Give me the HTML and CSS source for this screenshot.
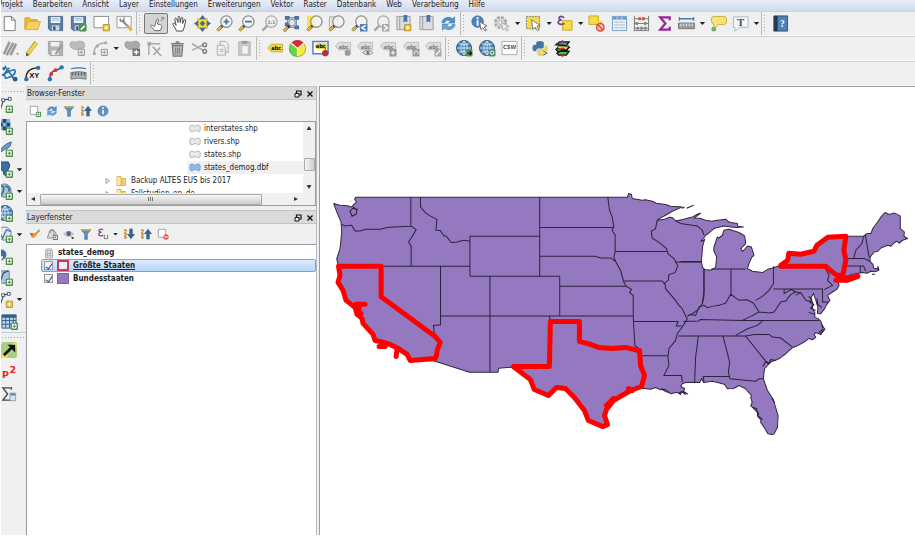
FILE: index.html
```
<!DOCTYPE html>
<html lang="de">
<head>
<meta charset="utf-8">
<title>QGIS</title>
<link rel="stylesheet" href="styles.css">
</head>
<body>
<svg class="defs" aria-hidden="true">
  <symbol id="plus" viewBox="0 0 8 8"><rect x=".7" y=".7" width="6.6" height="6.6" rx="1.2" fill="#fff" stroke="#4c8c4a" stroke-width="1.6"/><path d="M4 2.200v3.600M2.200 4h3.600" stroke="#4c8c4a" stroke-width="1.100"/></symbol>
  <symbol id="plusgray" viewBox="0 0 8 8"><rect x=".7" y=".7" width="6.6" height="6.6" rx="1" fill="#eee" stroke="#999" stroke-width="1.2"/><path d="M4 2v4M2 4h4" stroke="#999"/></symbol>
  <symbol id="star" viewBox="0 0 8 8"><rect x=".5" y=".5" width="7" height="7" rx="1" fill="#d9b83c" stroke="#b5942a"/><path d="M4 1.500v5M1.500 4h5M2.300 2.300l3.400 3.400M5.700 2.300 2.300 5.700" stroke="#fff8d0" stroke-width=".9"/></symbol>
  <symbol id="lens" viewBox="0 0 18 18"><path d="M1.500 16.500 7 11" stroke="#333" stroke-width="3"/><path d="M1.500 16.500 5.500 12.500" stroke="#e5bd3f" stroke-width="2.200"/><circle cx="11" cy="7" r="6" fill="#f4f4f2" fill-opacity=".8" stroke="#8b8b8b" stroke-width="1.300"/></symbol>
  <symbol id="lensgray" viewBox="0 0 18 18"><path d="M1.500 16.500 7 11" stroke="#a5a5a5" stroke-width="2.500"/><circle cx="11" cy="7" r="6" fill="#f0f0f0" stroke="#a8a8a8" stroke-width="1.300"/></symbol>
  <symbol id="floppy" viewBox="0 0 18 18"><path d="M1.500 1.500h15v15h-13l-2-2z" fill="#5a7ea6" stroke="#46678c"/><path d="M4 2h10v6.500H4z" fill="#edf2f7"/><path d="M5 3.500h8M5 5.500h8" stroke="#9eb4ca"/><path d="M5 11h8v5.500H5z" fill="#c9d3dc"/><path d="M6.500 12h2.500v4H6.500z" fill="#3c5878"/></symbol>
  <symbol id="tag" viewBox="0 0 18 18"><path d="M.5 6.500 4 2.500h12.500v8H4z" fill="#ddd" stroke="#bbb"/><text x="4" y="9" class="tagtext" fill="#777">abc</text></symbol>
  <symbol id="sync" viewBox="0 0 18 18"><path d="M2 8C2.500 3.500 9 .5 13 4l2.500-2v6.500H9l2-2C8.500 4.500 6 5.500 5 8z" fill="#4f8fc9" stroke="#3574ae" stroke-width=".6"/><path d="M16 10c-.5 4.500-7 7.500-11 4l-2.500 2V9.500H9l-2 2c2.500 2 5 1 6-1.500z" fill="#6ba5d8" stroke="#3574ae" stroke-width=".6"/></symbol>
  <symbol id="filter" viewBox="0 0 18 18"><path d="M1.500 2.500h15l-5.500 6.500v8H7V9z" fill="#5c8fc0" stroke="#45719e"/><path d="M1.500 2h15v2h-15z" fill="#d7b94c"/></symbol>
  <symbol id="globe" viewBox="0 0 18 18"><circle cx="8.500" cy="8.500" r="8" fill="#4b7fb2" stroke="#33597f"/><path d="M8.500 1v15M1 8.500h15M3 4q5.500 2.500 11 0M3 13q5.500-2.500 11 0M8.500 1Q1.500 8.500 8.500 16M8.500 1q7 7.500 0 15" fill="none" stroke="#d5e8f7"/></symbol>
  <symbol id="expand" viewBox="0 0 18 18"><path d="M3 2v14M3 4h4M3 9h4M3 14h4" stroke="#c89032" stroke-width="2.500" stroke-dasharray="3 1"/><path d="M12 17V8" stroke="#35658e" stroke-width="5"/><path d="M12 1l6 8H6z" fill="#35658e"/></symbol>
  <symbol id="shape" viewBox="0 0 14 10"><path d="M3.500 1C1 1 .7 3 1 5.500 1.300 9.500 3 9.500 4.500 8.500 6 7 9 7 10 8.500c1.500 1 3 .5 3-2.500C13.500 2 12.500 1 10.500 1 8 1 8 2.500 7 2.500S5.500 1 3.500 1z"/></symbol>
  <symbol id="folder" viewBox="0 0 10 10"><path d="M1 .5h4v2h4.500v7H1z" fill="#f2d675" stroke="#d7b650"/><path d="M2.500 1v8" stroke="#fff0b8" stroke-width="2"/><path d="M6 3v6" stroke="#d8aa35"/></symbol>
</svg>

<div class="app">
  <nav class="menubar" aria-label="Menü">
    <a href="#">Projekt</a><a href="#">Bearbeiten</a><a href="#">Ansicht</a><a href="#">Layer</a><a href="#">Einstellungen</a><a href="#">Erweiterungen</a><a href="#">Vektor</a><a href="#">Raster</a><a href="#">Datenbank</a><a href="#">Web</a><a href="#">Verarbeitung</a><a href="#">Hilfe</a>
  </nav>

  <div class="toolbar">
    <div class="group g-file">
      <button aria-label="Neu"><svg viewBox="0 0 18 18"><path d="M3.500 1.500h7.500l4 4v11H3.500z" fill="#fff" stroke="#777"/><path d="M11 1.500v4h4" fill="none" stroke="#777"/></svg></button>
      <button aria-label="Öffnen"><svg viewBox="0 0 18 18"><path d="M1 15V3h5l1.500 2H14v3" fill="#e9b93a" stroke="#cf9c27"/><path d="M1 15.500 4.500 7H17.500L14.500 15.500z" fill="#f8d260" stroke="#dcae38"/></svg></button>
      <button aria-label="Speichern"><svg viewBox="0 0 18 18"><use href="#floppy"/></svg></button>
      <button aria-label="Speichern als"><svg viewBox="0 0 18 18"><use href="#floppy"/><rect x="9.500" y="9.500" width="8" height="8" rx="1.500" fill="#4c9350"/><path d="M11.500 15.500 15.500 11.500" stroke="#fff" stroke-width="1.600"/></svg></button>
      <button aria-label="Neues Drucklayout"><svg viewBox="0 0 18 18"><path d="M1 1.500h15.500v12H1z" fill="#fff" stroke="#888"/><use href="#star" x="10" y="9.500" width="8" height="8"/></svg></button>
      <button aria-label="Layoutverwaltung"><svg viewBox="0 0 18 18"><path d="M1 1.500h15v12H1z" fill="#fff" stroke="#999"/><path d="M6 5.500l7 7" stroke="#888" stroke-width="2.200"/><path d="M4.500 3.500v3h3M9 2.500q-2 3 .5 4.500" fill="none" stroke="#888" stroke-width="1.400"/><path d="M12 11l4.500 5.500" stroke="#dcb43b" stroke-width="2.800"/></svg></button>
    </div>
    <span class="grip"></span>
    <div class="group g-nav">
      <button class="pressed" aria-label="Touch"><svg viewBox="0 0 18 18"><path d="M7 16.500 3 12c-.5-1.500 1-2 2-.8L7 12.500 9 5c.4-1.400 2.300-1 2 .5L10 9.500l3.500 1c1 .5 1.300 1.200 1 2.200l-1.500 3.800z" fill="#fff" stroke="#666"/><path d="M13.500 6.500l3-4M16.500 2.500h-2.500M16.500 2.500V5" fill="none" stroke="#888"/></svg></button>
      <button aria-label="Karte verschieben"><svg viewBox="0 0 18 18"><path d="M6 17 2 10c-.5-1.500 1-2 2-1l1.500 2L4 4.500C4 3 5.500 3 6 4.300L7.500 8V2.500C7.500 1 9.300 1 9.300 2.500L9.800 8l1-4.700c.4-1.300 1.700-1 1.700.3L12.300 9l1.500-3.500c.7-1.200 2-.6 1.700.7L14 13l-1.500 4z" fill="#fff" stroke="#444"/></svg></button>
      <button aria-label="Zur Auswahl verschieben"><svg viewBox="0 0 18 18"><path d="M4 4h10v10H4z" fill="#f6d833" stroke="#d9b92a"/><path d="M9 0l3.500 4.500h-7zM9 18l3.500-4.500h-7zM0 9l4.500-3.500v7zM18 9l-4.500-3.500v7z" fill="#3f6c9f"/><path d="M9 6l3 3-3 3-3-3z" fill="#3f6c9f"/></svg></button>
      <button aria-label="Hineinzoomen"><svg viewBox="0 0 18 18"><use href="#lens"/><path d="M11 4v6M8 7h6" stroke="#3f78b4" stroke-width="2"/></svg></button>
      <button aria-label="Hinauszoomen"><svg viewBox="0 0 18 18"><use href="#lens"/><path d="M7.500 7h7" stroke="#3f78b4" stroke-width="2"/></svg></button>
      <button aria-label="Native Auflösung"><svg viewBox="0 0 18 18"><use href="#lensgray"/><text x="7" y="9" class="tiny">1:1</text></svg></button>
      <button aria-label="Volle Ausdehnung"><svg viewBox="0 0 18 18"><path d="M2 1h5v4H2zM12 1h5v4h-5zM12 11h5v4h-5zM2 8h4v4H2z" fill="#46729f"/><path d="M5 3h9v10H5z" fill="none" stroke="#46729f"/><path d="M1 17l6-6" stroke="#333" stroke-width="3"/><path d="M1 17l4-4" stroke="#e0b63c" stroke-width="2.200"/><circle cx="9.500" cy="8" r="3.500" fill="#dce7ef" stroke="#888"/></svg></button>
      <button aria-label="Auf Auswahl zoomen"><svg viewBox="0 0 18 18"><path d="M1 1h10v12H1z" fill="#f5df54"/><use href="#lens"/></svg></button>
      <button aria-label="Auf Layer zoomen"><svg viewBox="0 0 18 18"><path d="M1.500 2h9v11h-9z" fill="#e7e7e7" stroke="#aaa"/><use href="#lens"/></svg></button>
      <button aria-label="Zoom zurück"><svg viewBox="0 0 18 18"><use href="#lens"/><path d="M9.500 9.500h8v8h-8z" fill="#4f83b8"/><path d="M15.500 11l-4 2.500 4 2.500" fill="none" stroke="#fff" stroke-width="1.500"/></svg></button>
      <button aria-label="Zoom vor"><svg viewBox="0 0 18 18"><use href="#lensgray"/><path d="M9.500 9.500h8v8h-8z" fill="#a9a9a9"/><path d="M11.500 11l4 2.500-4 2.500" fill="none" stroke="#fff" stroke-width="1.500"/></svg></button>
      <button aria-label="Neues Lesezeichen"><svg viewBox="0 0 18 18"><path d="M2 1.500h14v14H2z" fill="#ddd" stroke="#999"/><path d="M5 2v13" stroke="#999"/><path d="M9 0h4v8l-2-1.500L9 8z" fill="#3e77ae"/><use href="#star" x="9.500" y="9.500" width="8" height="8"/></svg></button>
      <button aria-label="Lesezeichen"><svg viewBox="0 0 18 18"><path d="M2 1.500h14v14H2z" fill="#ddd" stroke="#999"/><path d="M5 2v13" stroke="#999"/><path d="M9 0h4v8l-2-1.500L9 8z" fill="#3e77ae"/></svg></button>
      <button aria-label="Aktualisieren"><svg viewBox="0 0 18 18"><use href="#sync"/></svg></button>
    </div>
    <span class="grip"></span>
    <div class="group g-attr">
      <button aria-label="Objekte abfragen"><svg viewBox="0 0 18 18"><circle cx="7" cy="7" r="6" fill="#4c84bc" stroke="#3b6b9e"/><path d="M7 2.500v2M7 5.500v6" stroke="#fff" stroke-width="2"/><path d="M9 7l8 4.500-3 1 2.500 3.500-1.500 1-2.500-3.500-2 2z" fill="#fff" stroke="#666"/></svg></button>
      <button aria-label="Aktion ausführen"><svg viewBox="0 0 18 18"><circle cx="8" cy="8" r="5.500" fill="#ddd" stroke="#aaa" stroke-width="3" stroke-dasharray="3 1.300"/><circle cx="8" cy="8" r="2" fill="#fff" stroke="#aaa"/><path d="M9 8l8 4-3 1 2 3-1.500 1-2-3-2 2z" fill="#eee" stroke="#aaa"/></svg></button><i class="caret"></i>
      <button aria-label="Objekte wählen"><svg viewBox="0 0 18 18"><path d="M1.500 1.500h14v13h-14z" fill="#f6dc42" stroke="#777" stroke-dasharray="2 1"/><path d="M7 5l9 6-3.500.8 2.500 4-1.700 1-2.500-4-2.500 2.500z" fill="#fff" stroke="#777"/></svg></button><i class="caret"></i>
      <button aria-label="Mit Ausdruck wählen"><svg viewBox="0 0 18 18"><path d="M7 6h10v10H7z" fill="#f6dc42" stroke="#c9a72c"/><path d="M8.500 3Q6 .5 3.500 2.300 2.500 5 6 5.300 2 5.500 2.300 8.300 4 11 9 9" fill="none" stroke="#764584" stroke-width="1.800"/></svg></button><i class="caret"></i>
      <button aria-label="Auswahl aufheben"><svg viewBox="0 0 18 18"><path d="M1 1h10v9H1z" fill="#f6dc42" stroke="#c9a72c"/><path d="M10 6h5v5h-5z" fill="#f6dc42"/><circle cx="13" cy="13" r="4" fill="#f5c5bd" stroke="#d84d3d" stroke-width="1.500"/><path d="M10 10l6 6" stroke="#d84d3d" stroke-width="1.500"/></svg></button>
      <button aria-label="Attributtabelle"><svg viewBox="0 0 18 18"><path d="M1.500 1.500h15v15h-15z" fill="#f5f9fc" stroke="#6b9bc7"/><path d="M2 2h14v3H2z" fill="#6c9fcd"/><path d="M3 7.500h12M3 10.500h12M3 13.500h12" stroke="#9fb4c6"/><path d="M6.500 2v14M11.500 2v14" stroke="#c7d8e6"/></svg></button>
      <button aria-label="Feldrechner"><svg viewBox="0 0 18 18"><path d="M1.500 1v16M16.500 1v16M1 4h16M1 9h16M1 14h16M1 16.500h16" stroke="#777" fill="none"/><path d="M7 2.500v3M11 2.500v3" stroke="#df5045" stroke-width="3"/><path d="M4 7.500v3M13 7.500v3" stroke="#58a367" stroke-width="2.500"/><path d="M5 12.500v3M9 12.500v3M13 12.500v3" stroke="#888" stroke-width="2.500"/></svg></button>
      <button aria-label="Statistik"><svg viewBox="0 0 18 18"><path d="M14.500 5.500V2.500H4.500L10 9l-5.500 6.500h10V12.500" fill="none" stroke="#99229a" stroke-width="2.400"/></svg></button>
      <button aria-label="Linie messen"><svg viewBox="0 0 18 18"><path d="M1 4h16M1.500 2v4M16.500 2v4" stroke="#557da2" stroke-width="1.500"/><path d="M.5 8.500h17v6H.5z" fill="#999" stroke="#777"/><path d="M3 9v3M6 9v3M9 9v3M12 9v3M15 9v3" stroke="#eee"/></svg></button><i class="caret"></i>
      <button aria-label="Kartenhinweise"><svg viewBox="0 0 18 18"><path d="M5 1.500h10q2.500 0 2.500 3v3q0 2.500-3 2.500H9l-5 5.500V9.500Q1.500 9 1.500 6V4q0-2.500 3.500-2.500z" fill="#f6e47a" stroke="#c6aa3a"/><circle cx="4" cy="15" r="2.500" fill="#72a974"/></svg></button>
      <button aria-label="Textanmerkung"><svg viewBox="0 0 18 18"><path d="M1.500 2h15.500v11H8l-5 4v-4H1.500z" fill="#f5f8fa" stroke="#a8b6c0"/><text x="5.500" y="12" class="serif">T</text></svg></button><i class="caret"></i>
    </div>
    <span class="grip"></span>
    <div class="group g-one">
      <button aria-label="Hilfe"><svg viewBox="0 0 18 18"><path d="M2 1h14.500v16H2z" fill="#4e82b5" stroke="#30506e"/><path d="M2 1h4v16H2z" fill="#26394d"/><text x="8.500" y="13" class="help">?</text></svg></button>
    </div>
  </div>

  <div class="toolbar">
    <div class="group g-edit">
      <button aria-label="Aktuelle Änderungen"><svg viewBox="0 0 18 18"><path d="M2 15 8 2M5 16 12 3M9 16 15 4" stroke="#999" stroke-width="2.600"/><path d="M15 14h3l-1.500 2z" fill="#777"/></svg></button>
      <button aria-label="Bearbeitung umschalten"><svg viewBox="0 0 18 18"><path d="M3.500 15 13 2.500" stroke="#b79a32" stroke-width="4.500"/><path d="M4 14.500 13 3" stroke="#f4d64c" stroke-width="3"/><path d="M2 17.500l.5-4 3 2.500z" fill="#555"/></svg></button>
      <button aria-label="Änderungen speichern"><svg viewBox="0 0 18 18"><path d="M1.500 1.500h15v15h-13l-2-2z" fill="#b3b3b3" stroke="#a0a0a0"/><path d="M4 2h9v5H4zM5 11h7v5H5z" fill="#eee"/><path d="M9 15l7-10" stroke="#999" stroke-width="2"/></svg></button>
      <button aria-label="Objekt hinzufügen"><svg viewBox="0 0 18 18"><path d="M1 5q0-4 4-3 2 1 5-.5 6-1 6.500 3.500T12 9.500q-2.500-.5-4 .5-3 .5-4-1-3-1-3-4z" fill="#bcbcbc" stroke="#aaa"/><use href="#plusgray" x="9" y="9" width="8" height="8"/></svg></button>
      <button aria-label="Kreisbogen"><svg viewBox="0 0 18 18"><path d="M2 15Q2 3 15 3" fill="none" stroke="#aaa" stroke-width="1.500"/><path d="M1 13h3v3H1zM13 1.500h3v3h-3zM4 5h3v3H4z" fill="#aaa"/><use href="#plusgray" x="9" y="9" width="8" height="8"/></svg></button><i class="caret"></i>
      <button aria-label="Objekt verschieben"><svg viewBox="0 0 18 18"><path d="M1 5q0-4 4-3 2 1 5-.5 6-1 6.500 3.500T12 9.500q-2.500-.5-4 .5-3 .5-4-1-3-1-3-4z" fill="#aaa" stroke="#999"/><path d="M9 9h8v8H9z" fill="#777"/><path d="M13 10.500v5M10.500 13h5" stroke="#fff" stroke-width="1.500"/></svg></button>
      <button aria-label="Knotenwerkzeug"><svg viewBox="0 0 18 18"><path d="M3 16V4h12" fill="none" stroke="#aaa" stroke-width="1.500"/><path d="M1.500 2h4v4h-4z" fill="#aaa"/><path d="M7 7l9 10M15 8l-7 8" fill="none" stroke="#a5a5a5" stroke-width="1.600"/></svg></button>
      <button aria-label="Löschen"><svg viewBox="0 0 18 18"><path d="M3.500 6h11l-1 11h-9z" fill="#bbb" stroke="#777" stroke-width="1.300"/><path d="M2.500 4h13M7 2h4" stroke="#777" stroke-width="1.600"/><path d="M7 8v7M9 8v7M11 8v7" stroke="#777"/></svg></button>
      <button aria-label="Ausschneiden"><svg viewBox="0 0 18 18"><path d="M1 4l12 7M1 11l12-6" stroke="#aaa" stroke-width="1.700"/><circle cx="14.500" cy="5" r="2" fill="none" stroke="#777" stroke-width="1.400"/><circle cx="14.500" cy="12" r="2" fill="none" stroke="#777" stroke-width="1.400"/></svg></button>
      <button aria-label="Kopieren"><svg viewBox="0 0 18 18"><path d="M6.500 1.500h6l2.500 2.500v9H6.500z" fill="#eee" stroke="#aaa"/><path d="M3.500 5.500h6L12 8v8H3.500z" fill="#eee" stroke="#aaa"/><path d="M6 10h4M6 12h4" stroke="#aaa"/></svg></button>
      <button aria-label="Einfügen"><svg viewBox="0 0 18 18"><path d="M3 2h12v14H3z" fill="#ccc" stroke="#aaa"/><path d="M6 1h6v3H6z" fill="#999"/><path d="M6 6h7v9H6z" fill="#f4f4f4" stroke="#bbb"/></svg></button>
    </div>
    <span class="grip"></span>
    <div class="group g-label">
      <button aria-label="Beschriftung"><svg viewBox="0 0 18 18"><path d="M1 8.500 4.500 4.500h12v8h-12z" fill="#f2d93f" stroke="#c9ab2d"/><text x="4.500" y="10.500" class="tagtext">abc</text></svg></button>
      <button aria-label="Diagramm"><svg viewBox="0 0 18 18"><path d="M9 9 2.500 3.500A8.200 8.200 0 0 1 15.500 3.500z" fill="#e02a2a" stroke="#9a2020" stroke-width=".6"/><path d="M9 9 15.500 3.500A8.200 8.200 0 0 1 9 17.300z" fill="#f7ec35" stroke="#6b7a20" stroke-width=".6"/><path d="M9 9v8.300A8.200 8.200 0 0 1 2.500 3.500z" fill="#66d644" stroke="#3b8a2a" stroke-width=".6"/><path d="M2.500 3.500 9 9l6.500-5.500M9 9v8" fill="none" stroke="#fff" stroke-width="1.200"/></svg></button>
      <button aria-label="Beschriftung hervorheben"><svg viewBox="0 0 18 18"><path d="M1 1.500h16v13H1z" fill="#fff" stroke="#4f83c4" stroke-width="1.600"/><path d="M2.500 7 5 3.500h10.500v6H5z" fill="#f2d93f"/><text x="4" y="8.500" class="tagtext">abc</text><path d="M14 8v4" stroke="#555"/><circle cx="14" cy="14" r="3.300" fill="#c02d2d"/></svg></button>
      <button aria-label="Beschriftung fixieren"><svg viewBox="0 0 18 18"><use href="#tag"/><circle cx="13.500" cy="13.500" r="3.300" fill="#999"/></svg></button>
      <button aria-label="Beschriftung zeigen"><svg viewBox="0 0 18 18"><use href="#tag"/><path d="M6 13.500q5.500-5 11 0-5.500 4.500-11 0z" fill="#eee" stroke="#888"/><circle cx="11.500" cy="13.500" r="1.800" fill="#777"/></svg></button>
      <button aria-label="Beschriftung verschieben"><svg viewBox="0 0 18 18"><use href="#tag"/><path d="M10 9.500h7.500v8H10z" fill="#999"/><path d="M13.800 11v5M11.500 13.500h4.500" stroke="#fff"/></svg></button>
      <button aria-label="Beschriftung drehen"><svg viewBox="0 0 18 18"><use href="#tag"/><path d="M10 9.500h7.500v8H10z" fill="#999"/><path d="M12 15v-2q2-3 4 0v2" fill="none" stroke="#fff"/></svg></button>
      <button aria-label="Beschriftung ändern"><svg viewBox="0 0 18 18"><use href="#tag"/><path d="M10 9.500h7.500v8H10z" fill="#aaa"/><path d="M11.500 16 16 11" stroke="#fff" stroke-width="1.500"/></svg></button>
    </div>
    <span class="grip"></span>
    <div class="group g-three">
      <button aria-label="Metasuche"><svg viewBox="0 0 18 18"><use href="#globe"/><rect x="10.500" y="10" width="7" height="7.500" rx="1" fill="#4c9360"/><path d="M12 14h4M14.500 12l2 2-2 2" fill="none" stroke="#111" stroke-width="1.200"/></svg></button>
      <button aria-label="Websuche"><svg viewBox="0 0 18 18"><use href="#globe"/><rect x="10.500" y="10" width="7" height="7.500" rx="1" fill="#4c9360"/><circle cx="14" cy="13.500" r="1.800" fill="none" stroke="#fff"/></svg></button>
      <button aria-label="CSW"><svg viewBox="0 0 18 18"><path d="M1 1.500h16v14H1z" fill="#fdfdfd" stroke="#aaa"/><text x="2" y="10" class="csw">CSW</text></svg></button>
    </div>
    <span class="grip"></span>
    <div class="group g-two">
      <button aria-label="Python"><svg viewBox="0 0 18 18"><path d="M4.500 5V3q0-2 4-2t4 2v4q0 2-2 2H6.500Q4.500 9 4.500 12H3Q.5 12 .5 8.500T3 5h5.500" fill="#3f78a8"/><path d="M13.500 5.500q3.500 0 3.500 3.500t-3 3.500H9v1h4v1.500q0 2-3.500 2t-4-2v-3.500q0-2 2-2h4q2 0 2-2z" fill="#f4d258"/><path d="M12 12l4 2-4 2" fill="none" stroke="#555"/></svg></button>
      <button aria-label="Plugin"><svg viewBox="0 0 18 18"><path d="M3 14l5-3 8 1-3 4H5zM2 10l4-3 10 1-4 4H4z" fill="#49ba4b" stroke="#111" stroke-width="1.400"/><path d="M3 9l2-3 11 .5-3 4z" fill="#f0d530" stroke="#111"/><path d="M2 5l4-3h10l-3 4z" fill="#26a9c8" stroke="#111" stroke-width="1.400"/><path d="M9 0v3M9 15v3M7 9h4" stroke="#d92d2d" stroke-width="1.500"/></svg></button>
    </div>
  </div>

  <div class="toolbar last">
    <div class="group g-cad">
      <button aria-label="Spur"><svg viewBox="0 0 18 18"><path d="M4 1 14 15M1 11Q15 2 15 7T5 14Q1 9 9 3" fill="none" stroke="#2776ae" stroke-width="1.800"/><circle cx="15" cy="15" r="2.500" fill="#1f5f94"/><circle cx="3" cy="4" r="1.500" fill="#1f5f94"/></svg></button>
      <button aria-label="Kreis XY"><svg viewBox="0 0 18 18"><path d="M2 15Q2 3 15 3" fill="none" stroke="#222" stroke-width="1.500"/><circle cx="2.500" cy="15" r="2.300" fill="#2776ae"/><circle cx="15" cy="3" r="2.300" fill="#2776ae"/><text x="5.500" y="13.500" class="xy">XY</text></svg></button>
      <button aria-label="Linienzug"><svg viewBox="0 0 18 18"><path d="M3 15Q3 7 9 5.500T15 3" fill="none" stroke="#444" stroke-width="1.500"/><circle cx="4.500" cy="9.500" r="2" fill="#dd3232"/><circle cx="9" cy="5.500" r="2" fill="#dd3232"/><circle cx="3" cy="15" r="2.300" fill="#2776ae"/><circle cx="15.500" cy="2.500" r="2.300" fill="#2776ae"/></svg></button>
      <button aria-label="Maßstab"><svg viewBox="0 0 18 18"><path d="M1 4q8-2 16 0" fill="none" stroke="#3f78b4" stroke-width="1.300"/><path d="M1 8q8-2 16 0v7q-8-2-16 0z" fill="#b0b0b0" stroke="#777"/><path d="M3 8v3M6 8v3M9 8v3M12 8v3M15 8v3" stroke="#444"/></svg></button>
    </div>
    <span class="grip"></span>
  </div>

  <div class="workspace">
    <div class="sidebar">
      <span class="hgrip first"></span>
      <div class="stack eleven">
        <div><button aria-label="Vektorlayer"><svg viewBox="0 0 18 18"><path d="M3 16 7 4l8-1" fill="none" stroke="#456" stroke-width="1.300"/><path d="M5 3h3v3H5zM12 1.500h3v3h-3z" fill="#fff" stroke="#456"/><use href="#plus" x="9" y="10" width="8" height="8"/></svg></button></div>
        <div><button aria-label="Rasterlayer"><svg viewBox="0 0 18 18"><path d="M2 1h12v12H2z" fill="#8eb4d8"/><path d="M6 1h4v4H6zM2 5h4v4H2zM10 5h4v4h-4zM6 9h4v4H6z" fill="#1f4a78"/><use href="#plus" x="9" y="10" width="8" height="8"/></svg></button></div>
        <div><button aria-label="SpatiaLite"><svg viewBox="0 0 18 18"><path d="M2 15Q4 6 15 2q0 6-7 8-4 2-6 5z" fill="#6f9dc9" stroke="#31577d"/><use href="#plus" x="9" y="10" width="8" height="8"/></svg></button></div>
        <div><button aria-label="PostGIS"><svg viewBox="0 0 18 18"><path d="M3 1h9q3 3 0 8l-2 7q-4-1-3-5Q2 10 3 1z" fill="#3a6f9f" stroke="#264e75"/><use href="#plus" x="9" y="10" width="8" height="8"/></svg></button><i class="caret"></i></div>
        <div><button aria-label="WMS"><svg viewBox="0 0 18 18"><circle cx="8" cy="8" r="7" fill="#acc5dc" stroke="#5781a8"/><path d="M3 4q5-2 4 3T4 13M9 3q6 2 3 6" fill="none" stroke="#426f9b" stroke-width="2"/><use href="#plus" x="9" y="10" width="8" height="8"/></svg></button><i class="caret"></i></div>
        <div><button aria-label="WCS"><svg viewBox="0 0 18 18"><use href="#globe"/><use href="#plus" x="9" y="10" width="8" height="8"/></svg></button></div>
        <div><button aria-label="WFS"><svg viewBox="0 0 18 18"><circle cx="8" cy="8" r="7" fill="#dfeaf3" stroke="#5781a8"/><path d="M2 6l4 7 4-9 5 2" fill="none" stroke="#426f9b" stroke-width="1.300"/><use href="#plus" x="9" y="10" width="8" height="8"/></svg></button><i class="caret"></i></div>
        <div><button aria-label="Textdatei"><svg viewBox="0 0 18 18"><path d="M8 3a3.500 3.500 0 1 0-2 5.500Q7 11 3 14q7-2 7-7 0-3-2-4z" fill="#3e719f"/><use href="#plus" x="9" y="10" width="8" height="8"/></svg></button></div>
        <div><button aria-label="Virtueller Layer"><svg viewBox="0 0 18 18"><path d="M1 2h12v13H1z" fill="#a9c5dd" stroke="#62859f"/><path d="M3 14 7 4l5-2" fill="none" stroke="#35577a" stroke-width="1.400"/><use href="#plus" x="9" y="10" width="8" height="8"/></svg></button></div>
        <div><button aria-label="Neuer Layer"><svg viewBox="0 0 18 18"><path d="M3 16 7 4l7-1" fill="none" stroke="#456" stroke-width="1.300"/><path d="M5 3h3v3H5zM11 1.500h3v3h-3z" fill="#fff" stroke="#456"/><use href="#star" x="9" y="10" width="8" height="8"/></svg></button><i class="caret"></i></div>
        <div><button aria-label="Tabelle"><svg viewBox="0 0 18 18"><path d="M1 2h15v14H1z" fill="#bdd4e8" stroke="#315f8b"/><path d="M1 2h15v3H1z" fill="#315f8b"/><path d="M5 2v14M9 2v14M13 2v14M1 8h15M1 12h15" stroke="#315f8b"/><use href="#plus" x="10" y="10" width="8" height="8"/></svg></button></div>
      </div>
      <span class="hgrip"></span>
      <div class="stack three">
        <div><button aria-label="Pfeil"><svg viewBox="0 0 18 18"><rect width="17" height="17" rx="3" fill="#a9ce83"/><circle cx="4" cy="14" r="3" fill="#f2e642"/><circle cx="14" cy="4" r="3" fill="#f2e642"/><path d="M3 14 11 6" stroke="#111" stroke-width="3"/><path d="M7 3h8v8z" fill="#111"/></svg></button></div>
        <div><button aria-label="P2"><svg viewBox="0 0 18 18"><text x="1" y="15" class="red">P</text><text x="9" y="10" class="red">2</text></svg></button></div>
        <div><button aria-label="Summe"><svg viewBox="0 0 18 18"><path d="M11 4V2H2l5 6.500L2 15h8" fill="none" stroke="#444" stroke-width="1.400"/><path d="M9.500 7.500h6v8h-6z" fill="#d8e2ee" stroke="#8b9bb0"/><path d="M10 8h5v2h-5z" fill="#5079b7"/></svg></button></div>
      </div>
    </div>

    <div class="docks">
      <section class="dock">
        <header><h2>Browser-Fenster</h2><button aria-label="Abdocken"><svg viewBox="0 0 8 8"><path d="M2.500 3V1h4.500v4H5" fill="none" stroke="#111" stroke-width="1.200"/><path d="M1 3.500h4V7H1z" fill="#eee" stroke="#111"/></svg></button><button aria-label="Schließen"><svg viewBox="0 0 8 8"><path d="M1.500 1.500l5 5M6.500 1.500l-5 5" stroke="#111" stroke-width="1.400"/></svg></button></header>
        <div class="docktools">
          <button aria-label="Hinzufügen"><svg viewBox="0 0 18 18"><path d="M2 2h11v12H2z" fill="#fff" stroke="#999" stroke-width="1.300"/><use href="#plus" x="10" y="10" width="8" height="8"/></svg></button>
          <button aria-label="Aktualisieren"><svg viewBox="0 0 18 18"><use href="#sync"/></svg></button>
          <button aria-label="Filtern"><svg viewBox="0 0 18 18"><use href="#filter"/></svg></button>
          <button aria-label="Einklappen"><svg viewBox="0 0 18 18"><use href="#expand"/></svg></button>
          <button aria-label="Eigenschaften"><svg viewBox="0 0 18 18"><circle cx="9" cy="9" r="7.500" fill="#5b92c8" stroke="#41739f"/><path d="M9 3.500v2.500M9 7.500v6.500" stroke="#fff" stroke-width="2.300"/></svg></button>
        </div>
        <div class="browser">
          <div class="view">
            <ul class="files">
              <li class="file"><svg class="shp" viewBox="0 0 14 10"><use href="#shape"/></svg>interstates.shp</li>
              <li class="file"><svg class="shp" viewBox="0 0 14 10"><use href="#shape"/></svg>rivers.shp</li>
              <li class="file"><svg class="shp" viewBox="0 0 14 10"><use href="#shape"/></svg>states.shp</li>
              <li class="file current"><svg class="shp" viewBox="0 0 14 10"><use href="#shape"/></svg>states_demog.dbf</li>
              <li class="dir"><svg class="twist" viewBox="0 0 6 8"><path d="M1 1.500 4.500 4 1 6.500z" fill="#fff" stroke="#999"/></svg><svg class="fold" viewBox="0 0 10 10"><use href="#folder"/></svg>Backup ALTES EUS bis 2017</li>
              <li class="dir"><svg class="twist" viewBox="0 0 6 8"><path d="M1 1.500 4.500 4 1 6.500z" fill="#fff" stroke="#999"/></svg><svg class="fold" viewBox="0 0 10 10"><use href="#folder"/></svg>Fallstudien_en_de</li>
            </ul>
            <div class="vbar"><i class="up"></i><span class="thumb"></span><i class="down"></i></div>
          </div>
          <div class="hbar"><i class="left"></i><span class="thumb"><b></b></span><i class="right"></i></div>
        </div>
      </section>

      <section class="dock grow">
        <header><h2>Layerfenster</h2><button aria-label="Abdocken"><svg viewBox="0 0 8 8"><path d="M2.500 3V1h4.500v4H5" fill="none" stroke="#111" stroke-width="1.200"/><path d="M1 3.500h4V7H1z" fill="#eee" stroke="#111"/></svg></button><button aria-label="Schließen"><svg viewBox="0 0 8 8"><path d="M1.500 1.500l5 5M6.500 1.500l-5 5" stroke="#111" stroke-width="1.400"/></svg></button></header>
        <div class="docktools">
          <button aria-label="Stil"><svg viewBox="0 0 18 18"><path d="M10 9l6-6" stroke="#c89b45" stroke-width="3"/><path d="M1 7q7 2 8 0l3 3q-4 7-8 4z" fill="#e9a13a"/><path d="M1 7l6 2-3 3z" fill="#d8432f"/></svg></button>
          <button aria-label="Gruppe"><svg viewBox="0 0 18 18"><path d="M2 15 6 3h6v12zM6 8 9 2l6 5v6" fill="#ddd" stroke="#888" stroke-width="1.300"/><use href="#plus" x="10" y="10" width="8" height="8"/></svg></button>
          <button aria-label="Sichtbarkeit"><svg viewBox="0 0 18 18"><path d="M1 9q7-8 15 0-8 7-15 0z" fill="#ddd" stroke="#999"/><circle cx="8.500" cy="8.500" r="3.500" fill="#456a91"/><path d="M12 14h5l-2.500 3z" fill="#222"/></svg></button>
          <button aria-label="Filter"><svg viewBox="0 0 18 18"><use href="#filter"/></svg></button>
          <button aria-label="Ausdrucksfilter"><svg viewBox="0 0 18 18"><path d="M9 3Q6 .5 3 3q-.5 3 4 3.500Q2 7 2.500 10q2 3 7 1" fill="none" stroke="#8a4f9c" stroke-width="2"/><path d="M11 10v6h5v-6" fill="none" stroke="#777" stroke-width="1.500"/></svg></button><i class="caret"></i>
          <button aria-label="Ausklappen"><svg viewBox="0 0 18 18"><path d="M3 2v14M3 4h4M3 9h4M3 14h4" stroke="#c89032" stroke-width="2.500" stroke-dasharray="3 1"/><path d="M12 1v9" stroke="#35658e" stroke-width="5"/><path d="M12 17l6-8H6z" fill="#35658e"/></svg></button>
          <button aria-label="Einklappen"><svg viewBox="0 0 18 18"><use href="#expand"/></svg></button>
          <button aria-label="Entfernen"><svg viewBox="0 0 18 18"><path d="M2 2h11v12H2z" fill="#fff" stroke="#999" stroke-width="1.300"/><circle cx="13.500" cy="13.500" r="4" fill="#dc5a5a"/><path d="M11 13.500h5" stroke="#fff" stroke-width="1.500"/></svg></button>
        </div>
        <ul class="layers">
          <li><svg class="tab" viewBox="0 0 11 12"><path d="M1.500 3.500h8v8h-8zM2.500 3.500v-2h6v2M1.500 6.500h8M1.500 9h8M4 4v7M7 4v7" fill="#eee" stroke="#aaa"/></svg>states_demog</li>
          <li class="active"><input type="checkbox" id="l1" checked><span class="swatch outline"></span><label for="l1">Größte Staaten</label></li>
          <li><input type="checkbox" id="l2" checked><span class="swatch"></span><label for="l2">Bundesstaaten</label></li>
        </ul>
      </section>
    </div>

    <main class="canvas">
      <svg class="map" viewBox="320 87 594 448" preserveAspectRatio="xMinYMin meet" role="img" aria-label="Karte der Bundesstaaten">
        <path class="land" d="M333.700 203.300 340 205 347 205.500 351.700 206.700 354 204 356.500 202 354.500 199 355.700 197H626.700L628.300 193.300 631 194.300 631.700 198.300 641.700 200 645 199.500 651.700 201 656 203 665 204.300 670 206 681.700 206.700 671.700 211 665 215 660 217.700 656.700 220 664 219 669 217 671.700 217.300 675 220.700 683 219 691.700 216.700 698.300 213.300 700 213 696 216 693.300 217.700 699 218 705 220 711 221 716.700 220 725 219 727 221 730 222.300 736.700 223.300 737 226 742.700 226.700 735 227.300 723.300 225.700 718 227 713.300 228.300 708 233 705 235 703 238 700 241 703 240 704 239 702 246 701.300 255 700.700 261.700 702 267 704 269.300 710 270 713 268.500 715 266.700 716 256.700 713 250 713.300 246.700 716.700 236.700 718 238 721.700 235 723.300 230 728.300 229 738.300 232.300 744 235.700 745 243.300 740 248.300 741.700 251 744 249 746.700 245.700 750.700 246.700 753.300 255 751 257 748.300 263.300 746.700 268.300 751.700 271 761.700 272.300 767 269 771.700 267.700 780 265 788.300 260 786.700 253.300 796.700 253.300 813 251.700 815 245 826.700 236.700 845 236H862.700L866 233.300 870 233.300 872 228 876.700 221.700 880 216.700 884 212.300 888.300 214.300 893.300 212.700 899.300 215.700 899.300 228.300 903.300 231.700 903 236 906.700 238.300 901.700 240 898 243 896 241 893.300 242.300 890 246 886.700 245 880 247.700 877 251 873.300 251.700 869.300 256.700 869 261 872 264 873 268 877 268.500 877 266 878 270 874 271.500 870 271 866 273 861.700 272.300 850 274.300 843 276.700 836.700 281.700 838.300 285 836 289 831.700 291.700 826.700 295 829 300 826 304 824 308 820 313.300 816.700 313 817 307 815 300 812.700 293 810 298 812 303 811.700 308 814 312 814 317 817 318 820 320.700 821 325 822.700 330 820 334 815 332 813.300 334 815 337 811.700 339.300 808 338 803.300 341.700 797 345 791.700 347.300 785 353.300 780 357 776.700 359 771 361 768.300 363.300 764 368 763.300 371.700 762.700 378.300 766.700 390 772 398 773.300 401.700 777.300 415 776.700 426.700 773.300 433.300 771 434 767.300 433.300 763.300 426.700 760 422 760 419 757 416 758 413 752 407 750 405 751.500 402 750 397 750.700 395 745 388.300 738.300 385 733 388 726.700 388.300 724 384 721.700 383.300 711.700 380.700 703 382 701 378 699 382 693.300 381.700 685 382 681.700 383.300 680 386 684 388 683 391 687 393.500 681 391 680 394 676.700 391.700 670 393.300 665 389 660 389.300 655 387 650 388.700 641.700 387.700 629 390 613.300 400 605 411.700 606.700 425 598 424.300 588.300 420 583.300 410 573.300 395 565 386.700H555L548.300 395 535 389 530 378.300 512.300 366.700 498.300 367.700 497.700 371.700H469.300L433.300 360.300 410 360 405 353.300 393.300 346.700 375 340 371.700 333 362.300 321.700 356.700 311.700 345 298.300 343.300 290 337.700 281.700 340 273.300 338.300 266 336.700 258.300 340 248.300 341.700 231.700 341 221.700 336.700 211.700z"/>
        <path class="detail" d="M350 211l3-3 4 1-1 5-4 2zM353 207l4 3M350.500 201h.5M681 208l3-1M686 208l7-3M876 268l2 1M871 274h3M821 324l3 5-5 5M818 332l4-3"/>
        <g class="states" transform="translate(325 185) scale(.33333)">
          <path d="M257 36V122L273 133 262 152 250 170 258 182V243M50 118 60 122 80 120 90 137 105 137 120 132 165 132 190 126 257 123M286 36V65L300 82 315 92 335 103 332 135 345 136 355 150 365 155 378 172 395 170 415 165 434 168M40 243H434M434 273V153H643M434 273H703M346 243V418L325 420 328 450M346 392H923M494 273V560"/>
        </g>
        <g class="states" transform="translate(505 185) scale(.33333)">
          <path d="M103 36V273M103 127H325M103 213H270L285 218 315 218 330 228 345 255 355 290 362 303M163 303H362L378 312 372 322 383 330V392L388 480 402 492M163 273V392M133 392V405M307 36 312 75 320 95 325 125 320 135 329 150V200L325 215 330 228M329 199H483M352 287H470L478 297M455 105 450 130 437 138 440 158 465 175 483 190 487 205 505 220 517 242 508 262 490 268 488 285 478 292 480 310 510 345 520 360 530 370 540 392 545 400 530 425 515 445 510 465 490 490 487 515 490 540 475 570H528L530 590M508 230H588M595 253V320L590 355 575 375 560 385 545 392M385 408H518L512 422H528M402 511H487"/>
        </g>
        <g class="states" transform="translate(630 290) scale(.33333)">
          <path d="M143 137H345L370 132 415 132 425 140 450 143 485 170M158 93 205 92 208 87 335 90H565M395 92 380 105 350 115 315 135M203 137 195 200 192 275M277 137 297 215 293 245 298 265 375 272 385 265 398 265M220 275 218 258H295M345 137 375 175 395 200 412 220M175 72 195 75 205 50 220 45 230 52 245 48 265 45 285 38 300 12 325 30 350 28 368 38M335 90 360 78 385 65M368 38 385 65 415 68 430 65 450 35 465 32 480 12 495 5"/>
        </g>
        <g class="states" transform="translate(680 185) scale(.33333)">
          <path d="M-15 107 0 115 50 122 65 135 70 150M0 229H62M70 250V332L65 355M92 251H195M151 251V327M278 243V295L265 315 245 333 225 345M278 311H425V350H440M310 311V325L330 313 345 320 360 322 375 345 395 350M360 322 345 330M430 245 445 268 440 285 455 300 430 313M548 153 543 175 525 195 518 220M553 148 565 217M495 220H550L568 228M495 242H548L555 258M538 242V264"/>
        </g>
        <path class="coast" d="M808 296l3 3-2 3 4 2-3 4 5 2M808 312l6 2M762 366l3-5 3 2 2-4 5 1M752 407l4 1 1 7 5 4M771 398l3 4M661 388l4 3 4 1M678 393l3-2 4 3M816 298l1 6 4 3"/>
        <path class="big" d="M338.500 266H381V296.500L435 336 440 342 437 350 436 356 435 358 410 360 407 354 398 348 390 344 380 341 375 340 373 334 363 323 362 318 357 314 355 307 346 300 343 290 338 282 340 275zM356 304h9M357 311l4 2M379 346h6M397 348l-1 8M359 305v10M550 321H579V341L590 344 598 347 612 348 625 347 637 350H639L640 365 644 375 641 386 630 390 613 400 606 409 604 415 607 424 602 426 588 420 584 410 574 397 565 388 556 387 548 395 534 389 530 379 513 366H549zM628 388l4 2M606 405l7-7M780 265 787 260 788 253 800 254 813 251 816 245 827 237 845 236 843 250 845 260 842 275 836 275 828 269 825 266H780zM835 280 857 276 846 280zM842 275l1 4"/>
      </svg>
    </main>
  </div>
</div>
</body>
</html>
```
FILE: styles.css
```
* { box-sizing: border-box; }
body {
  margin: 0;
  background: #fff;
  font: 8px/12px "DejaVu Sans Condensed", "DejaVu Sans", sans-serif;
  color: #222;
}
.defs { display: none; }
.app {
  display: flex;
  flex-direction: column;
  height: 100vh;
  overflow: hidden;
  border: solid #fff;
  border-width: 0 0 1px 1px;
  background: #f0f0f0;
}
button {
  display: flex;
  align-items: center;
  justify-content: center;
  min-width: 0;
  padding: 0;
  border: 0;
  background: none;
}
svg { display: block; flex: none; }
ul { margin: 0; padding: 0; list-style: none; }

.menubar {
  display: flex;
  gap: 10px;
  height: 11px;
  padding-left: 1px;
  margin-left: -4px;
  background: linear-gradient(#e8edf7, #d0daed);
  line-height: 9px;
  white-space: nowrap;
}
.menubar a { color: #222; text-decoration: none; }

.toolbar {
  display: flex;
  flex: none;
  height: 25px;
  border-top: 1px solid #d0d0d0;
  border-bottom: 1px solid #f8f8f8;
}
.toolbar svg { width: 17px; height: 17px; }
.group { display: flex; align-items: center; flex: none; }
.group button { flex: 1 1 0; height: 21px; }
.group .pressed {
  border: 1px solid #777;
  border-radius: 2px;
  background: #d4d4d4;
}
.g-file { width: 138px; margin-left: -3px; }
.g-nav { width: 316px; }
.g-attr { width: 293px; }
.g-one { width: 22px; }
.g-edit { width: 257px; margin-left: -2px; }
.g-label { width: 181px; }
.g-three { width: 68px; }
.g-two { width: 45px; }
.g-cad { width: 92px; margin-left: -3px; }
.grip {
  flex: none;
  width: 8px;
  border-left: 1px solid #bbb;
  background: radial-gradient(circle, #a8a8a8 1px, transparent 1px) 2px 2px / 3px 3px content-box;
  padding: 3px 2px;
}
.caret {
  flex: none;
  width: 9px;
  height: 3px;
  background: #222;
  clip-path: polygon(20% 0, 80% 0, 50% 100%);
}

.workspace { display: flex; flex: 1; min-height: 0; }
.sidebar { width: 25px; flex: none; }
.hgrip {
  display: block;
  height: 8px;
  padding: 3px 1px 2px 0;
  border-top: 1px solid #ccc;
  background: radial-gradient(circle, #a8a8a8 1px, transparent 1px) 0 0 / 3px 3px content-box;
}
.hgrip.first { border-top-color: #f0f0f0; }
.stack { display: flex; flex-direction: column; }
.stack div { display: flex; flex: 1; align-items: center; }
.stack svg { width: 17px; height: 17px; }
.stack button { width: 17px; margin-left: -4px; }
.stack .caret { margin-left: 1px; }
.eleven { height: 238px; }
.eleven div:last-child button, .three button { margin-left: 0; }
.three { height: 65px; }

.docks {
  display: flex;
  flex-direction: column;
  gap: 4px;
  flex: none;
  width: 291px;
  border-right: 1px solid #b4b8c2;
}
.dock { display: flex; flex-direction: column; }
.grow { flex: 1; min-height: 0; }
.dock header {
  display: flex;
  align-items: center;
  gap: 4px;
  height: 14px;
  padding: 1px 2px 0 0;
  border: solid #c4c4c4;
  border-width: 1px 0;
  background: #dadada;
}
.dock h2 { flex: 1; margin: 0 0 0 1px; font-size: 8px; font-weight: 400; }
.dock header svg { width: 8px; height: 8px; }
.docktools { display: flex; align-items: center; height: 21px; }
.grow .docktools { height: 20px; }
.docktools button { width: 17px; height: 17px; }
.docktools svg { width: 12px; height: 12px; }

.browser { border: 1px solid #999ca3; background: #fff; }
.view { display: flex; height: 71px; overflow: hidden; }
.files { flex: 1; line-height: 13px; white-space: nowrap; }
.files li { display: flex; align-items: center; height: 13px; }
.file { gap: 3px; margin-left: 160px; padding-left: 2px; }
.current { border-radius: 2px; background: #f0f0f0; }
.shp { width: 12px; height: 9px; fill: #e9e9e9; stroke: #aaa; }
.current .shp { fill: #8fbbe4; stroke: #6d9bc6; }
.dir { gap: 5px; padding-left: 78px; }
.twist { width: 6px; height: 8px; }
.fold { width: 10px; height: 10px; }
.vbar, .hbar { display: flex; align-items: center; justify-content: space-between; background: #f0f0f0; }
.vbar { flex-direction: column; width: 12px; padding: 4px 0; }
.vbar .thumb {
  width: 11px;
  height: 13px;
  margin-top: 14px;
  border: 1px solid #aaa;
  border-radius: 1px;
  background: linear-gradient(90deg, #f6f6f6, #ccc);
}
.hbar { height: 12px; padding: 0 17px 0 4px; }
.hbar .thumb {
  display: flex;
  align-items: center;
  justify-content: center;
  width: 222px;
  height: 11px;
  margin-right: 28px;
  border: 1px solid #aaa;
  border-radius: 1px;
  background: linear-gradient(#f6f6f6, #ccc);
}
.hbar b { width: 6px; height: 4px; background: repeating-linear-gradient(90deg, #777 0 1px, transparent 1px 2px); }
.up, .down, .left, .right { width: 5px; height: 4px; background: #333; }
.up { clip-path: polygon(50% 0, 100% 100%, 0 100%); }
.down { clip-path: polygon(0 0, 100% 0, 50% 100%); }
.left { clip-path: polygon(0 50%, 80% 0, 80% 100%); }
.right { clip-path: polygon(20% 0, 100% 50%, 20% 100%); }

.layers {
  flex: 1;
  padding-top: 1px;
  border: solid #999ca3;
  border-width: 1px 0 0 1px;
  background: #fff;
  font-weight: 700;
}
.layers li {
  display: flex;
  align-items: center;
  gap: 4px;
  height: 13px;
  margin-left: 14px;
  padding-left: 2px;
  border: 1px solid transparent;
}
.tab { width: 10px; height: 12px; }
.layers .active {
  border-color: #7da2ce;
  border-radius: 2px;
  background: linear-gradient(#dcebfc, #b8d5f8);
  text-decoration: underline;
}
.layers input {
  appearance: none;
  width: 9px;
  height: 9px;
  margin: 0;
  border: 1px solid #999;
  background: #f2f2f2;
  display: grid;
  place-items: center;
}
.layers input:checked::before {
  content: "";
  width: 3px;
  height: 6px;
  border: solid #2c3f94;
  border-width: 0 1px 1px 0;
  transform: rotate(35deg);
}
.swatch { width: 12px; height: 11px; border: 1px solid #7b63a5; background: #9479c0; }
.swatch.outline { border: 2px solid #cb3a5c; background: #e8eef8; }

.canvas {
  flex: 1;
  min-width: 0;
  margin-left: 2px;
  border: solid #9a9ca2;
  border-width: 1px 0 0 1px;
  background: #fff;
}
.map { width: 100%; height: auto; }
.land { fill: #9479c0; stroke: #32283f; stroke-width: 1; stroke-linejoin: round; }
.detail, .coast { fill: none; stroke: #221b2b; stroke-width: 1; }
.states { fill: none; stroke: #2c2338; stroke-width: 3; }
.big { fill: none; stroke: #f00; stroke-width: 5; stroke-linejoin: round; stroke-linecap: round; }

.tagtext { font: 700 6px "DejaVu Sans Condensed", sans-serif; }
.tiny { font: 700 5px "DejaVu Sans Condensed", sans-serif; fill: #777; }
.serif { font: 700 11px "Liberation Serif", serif; fill: #444; }
.help { font: 700 10px "Liberation Serif", serif; fill: #fff; }
.csw { font: 700 6px "DejaVu Sans Condensed", sans-serif; fill: #555; }
.xy { font: 700 8px "Liberation Sans", sans-serif; fill: #111; }
.red { font: 700 10px "DejaVu Sans", sans-serif; fill: #e22; }
```
